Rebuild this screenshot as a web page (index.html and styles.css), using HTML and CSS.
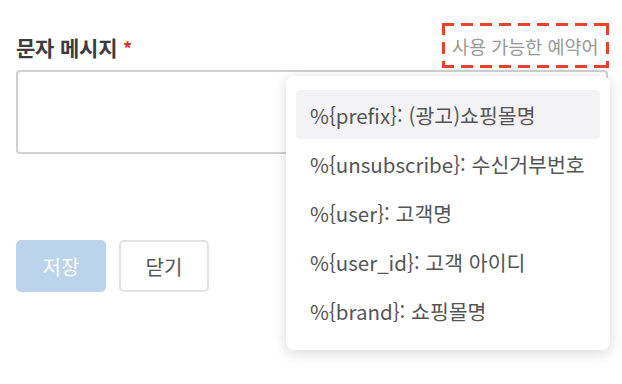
FILE: index.html
```html
<!DOCTYPE html>
<html lang="ko">
<head>
<meta charset="utf-8">
<link rel="stylesheet" href="styles.css">
</head>
<body>
<div class="page">
  <div class="head">
    <label class="label">문자 메시지 <span class="req">*</span></label>
    <div class="vars">사용 가능한 예약어</div>
  </div>
  <div class="textarea"></div>
  <div class="actions">
    <button class="btn btn-primary">저장</button>
    <button class="btn btn-default">닫기</button>
  </div>
  <ul class="menu">
    <li class="item active">%{prefix}: (광고)쇼핑몰명</li>
    <li class="item">%{unsubscribe}: 수신거부번호</li>
    <li class="item">%{user}: 고객명</li>
    <li class="item">%{user_id}: 고객 아이디</li>
    <li class="item">%{brand}: 쇼핑몰명</li>
  </ul>
</div>
</body>
</html>
```
FILE: styles.css
```css
* { box-sizing: border-box; }
html, body { margin: 0; padding: 0; background: #fff; }
body { font-family: "Noto Sans CJK KR", "Noto Sans", sans-serif; }
.page { position: relative; width: 622px; height: 384px; padding: 23px 13px 0 16px; }
.head { display: flex; justify-content: space-between; align-items: center; height: 45px; }
.label { font-size: 21px; font-weight: 700; color: #3c3c3c; margin-top: 2px; letter-spacing: -0.2px; }
.req { color: #d9312b; font-size: 18px; }
.vars {
  height: 45px; width: 167px; padding-left: 10px; display: flex; align-items: center;
  font-size: 18.5px; color: #999;
  background:
    repeating-linear-gradient(90deg, #e8412c 0 12px, transparent 12px 19px) left top / 100% 3px no-repeat,
    repeating-linear-gradient(90deg, #e8412c 0 12px, transparent 12px 19px) left bottom / 100% 3px no-repeat,
    repeating-linear-gradient(180deg, #e8412c 0 12px, transparent 12px 19px) left top / 3px 100% no-repeat,
    repeating-linear-gradient(180deg, #e8412c 0 12px, transparent 12px 19px) right top / 3px 100% no-repeat;
}
.textarea { margin-top: 2px; height: 84px; border: 2px solid #d0d0d0; border-radius: 4px; margin-right: 1px; }
.actions { display: flex; gap: 13px; margin-top: 86px; }
.btn { height: 52px; width: 90px; border-radius: 5px; font-family: inherit; font-size: 20px; }
.btn-primary { background: #bcd3ec; border: none; color: #fff; }
.btn-default { background: #fff; border: 2px solid #e3e3e3; color: #555; }
.menu { position: absolute; left: 286px; top: 76px; width: 324px; height: 274px; margin: 0; padding: 14px 10px; list-style: none; background: #fff; border-radius: 8px; box-shadow: 0 3px 14px rgba(0,0,0,0.16); }
.item { height: 49px; display: flex; align-items: center; padding-left: 14px; font-size: 20.5px; color: #555; border-radius: 4px; }
.item.active { background: #f3f3f5; }
```
